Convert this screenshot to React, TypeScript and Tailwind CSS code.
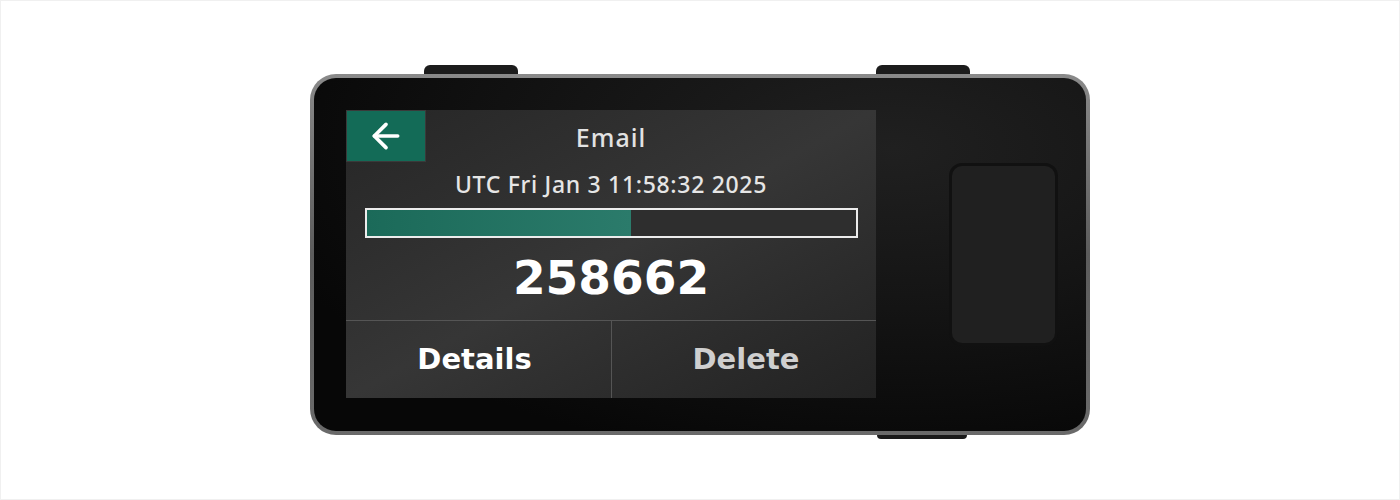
import { ArrowLeft } from 'lucide-react'

const progress = 54

export default function App() {
  return (
    <div className="w-[1400px] h-[500px] bg-white border border-[#f0f0f0] flex items-center justify-center">
      <div className="relative mt-[9px]">
        {/* hardware buttons */}
        <div className="absolute -top-[9px] left-[114px] w-[94px] h-[12px] rounded-t-[6px] bg-[#1c1c1c]" />
        <div className="absolute -top-[9px] left-[566px] w-[94px] h-[12px] rounded-t-[6px] bg-[#1c1c1c]" />
        <div className="absolute -bottom-[4px] left-[567px] w-[90px] h-[6px] rounded-b-[4px] bg-[#1a1a1a]" />

        {/* rim */}
        <div className="relative w-[780px] h-[361px] rounded-[26px] p-[4px] bg-gradient-to-b from-[#8a8a8a] via-[#5c5c5c] to-[#6a6a6a]">
          <div className="w-full h-full rounded-[22px] bg-[radial-gradient(ellipse_at_75%_20%,#202020_0%,#141414_40%,#070707_80%)] flex items-center pl-[32px] pr-[28px]">

            {/* screen */}
            <div className="w-[530px] h-[288px] mb-px flex flex-col bg-gradient-to-br from-[#262626] via-[#363636] to-[#222222] text-[#e6e6e6]" style={{ fontFamily: '"Noto Sans", "Open Sans", sans-serif' }}>
              <div className="relative h-[52px] flex items-center justify-center">
                <button className="absolute left-0 top-0 w-[80px] h-[52px] bg-[#136b57] border border-[#3a3a3a] flex items-center justify-center">
                  <ArrowLeft className="w-[40px] h-[40px] text-white" strokeWidth={2.2} />
                </button>
                <span className="text-[25px] font-medium tracking-[0.04em] text-[#e2e2e2] pt-[4px]">Email</span>
              </div>

              <div className="text-center text-[23px] font-medium tracking-[0.03em] leading-[26px] mt-[9px]">UTC Fri Jan 3 11:58:32 2025</div>

              <div className="mx-[19px] mr-[18px] mt-[11px] h-[30px] border-[2px] border-[#ececec] bg-[#2e2e2e]">
                <div className="h-full bg-gradient-to-r from-[#1b6a59] to-[#2b7b6b]" style={{ width: `${progress}%` }} />
              </div>

              <div className="text-center text-[47px] font-bold leading-[56px] text-white mt-[12px]" style={{ fontFamily: '"DejaVu Sans", sans-serif' }}>
                258662
              </div>

              <div className="mt-auto h-[78px] border-t border-[#555555] flex" style={{ fontFamily: '"DejaVu Sans", sans-serif' }}>
                <button className="w-[266px] h-full flex items-center justify-center pr-[8px] text-[29px] font-bold text-white border-r border-[#555555]">
                  Details
                </button>
                <button className="flex-1 h-full flex items-center justify-center pl-[4px] text-[29px] font-bold text-[#cfcfcf]">
                  Delete
                </button>
              </div>
            </div>

            {/* fingerprint pad */}
            <div className="ml-auto w-[109px] h-[183px] rounded-[13px] bg-[#202020] border-[3px] border-[#111111]" />
          </div>
        </div>
      </div>
    </div>
  )
}
